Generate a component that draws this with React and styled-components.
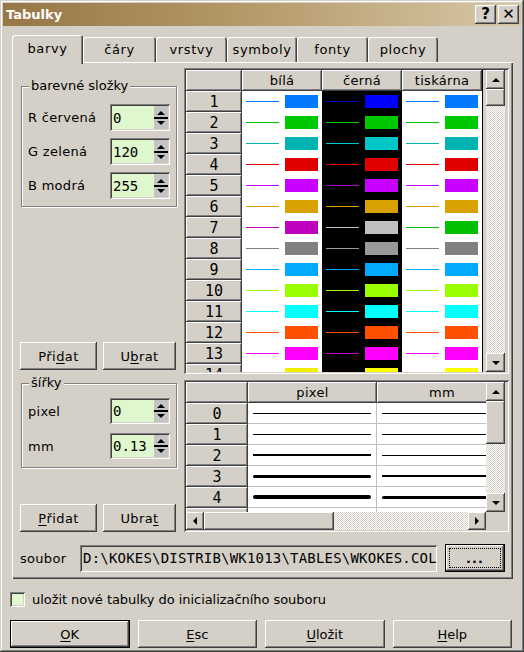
import React from 'react';
import styled, { createGlobalStyle, css } from 'styled-components';

const FACE = '#d4d0c8';
const SANS = `"DejaVu Sans", Verdana, sans-serif`;
const MONO = `"DejaVu Sans Mono", "Liberation Mono", monospace`;

const raised = css`
  box-shadow: inset -1px -1px #404040, inset 1px 1px #ffffff, inset -2px -2px #808080, inset 2px 2px ${FACE};
`;
const sunken = css`
  box-shadow: inset 1px 1px #808080, inset -1px -1px #ffffff, inset 2px 2px #404040, inset -2px -2px ${FACE};
`;
const checker = css`
  background: repeating-conic-gradient(#ffffff 0% 25%, ${FACE} 0% 50%) 0 0 / 2px 2px;
`;

const Global = createGlobalStyle`
  html, body { margin: 0; padding: 0; background: ${FACE}; }
  body { font-family: ${SANS}; font-size: 13px; color: #000; }
  * { box-sizing: border-box; }
`;

const Window = styled.div`
  width: 524px;
  height: 652px;
  background: ${FACE};
  padding: 3px;
  display: flex;
  flex-direction: column;
  font-family: ${SANS};
  font-size: 13px;
  box-shadow: inset -1px -1px #404040, inset 1px 1px ${FACE}, inset -2px -2px #808080, inset 2px 2px #ffffff;
`;

const TitleBar = styled.div`
  height: 23px;
  display: flex;
  align-items: center;
  justify-content: space-between;
  padding: 0 2px 0 2px;
  background: linear-gradient(90deg, #987646 0%, #b49868 45%, #d6c8a6 100%);
`;

const TitleText = styled.span`
  color: #fff;
  font-weight: bold;
  font-size: 13px;
  padding-left: 1px;
`;

const TitleButtons = styled.div`
  display: flex;
  gap: 2px;
`;

const TitleButton = styled.div`
  width: 21px;
  height: 19px;
  background: ${FACE};
  ${raised};
  display: flex;
  align-items: center;
  justify-content: center;
  font-weight: bold;
  font-size: 15px;
  line-height: 1;
  color: #000;
`;

const Content = styled.div`
  flex: 1;
  display: flex;
  flex-direction: column;
  padding: 9px 7px 0 7px;
`;

const TabRow = styled.div`
  height: 27px;
  margin-left: 2px;
  display: flex;
  align-items: flex-end;
  position: relative;
  z-index: 1;
`;

const Tab = styled.div`
  width: ${p => p.$w}px;
  height: ${p => (p.$active ? 29 : 25)}px;
  margin-bottom: ${p => (p.$active ? -2 : 0)}px;
  background: ${FACE};
  border-radius: 3px 3px 0 0;
  box-shadow: inset 1px 1px #ffffff, inset -1px 0 #404040, inset -2px 0 #808080;
  display: flex;
  align-items: center;
  justify-content: center;
  padding-bottom: ${p => (p.$active ? 3 : 0)}px;
  font-size: 13px;
  letter-spacing: 0.6px;
`;

const Panel = styled.div`
  margin-left: 2px;
  width: 501px;
  height: 517px;
  padding: 6px 4px 7px 9px;
  display: flex;
  flex-direction: column;
  box-shadow: inset 1px 1px #ffffff, inset -1px -1px #404040, inset -2px -2px #808080;
`;

const MainArea = styled.div`
  height: 464px;
  display: flex;
  gap: 7px;
`;

const LeftCol = styled.div`
  width: 156px;
  display: flex;
  flex-direction: column;
`;

const GroupBox = styled.div`
  position: relative;
  margin-top: ${p => p.$mt}px;
  height: ${p => p.$h}px;
  border: 1px solid #808080;
  box-shadow: inset 1px 1px #ffffff, 1px 1px #ffffff;
  padding: ${p => p.$pt}px 6px 0 6px;
  display: flex;
  flex-direction: column;
  gap: ${p => p.$gap}px;
`;

const GroupLegend = styled.span`
  position: absolute;
  left: 7px;
  top: -9px;
  padding: 0 2px;
  background: ${FACE};
  font-size: 13px;
  line-height: 16px;
`;

const FieldRow = styled.div`
  height: ${p => p.$h}px;
  display: flex;
  align-items: center;
  justify-content: space-between;
`;

const FieldLabel = styled.span`
  font-size: 13px;
  letter-spacing: 0.3px;
`;

const SpinBox = styled.div`
  width: 60px;
  height: 100%;
  padding: 2px;
  display: flex;
  ${sunken};
  background: #dff7cc;
`;

const SpinInput = styled.div`
  flex: 1;
  display: flex;
  align-items: center;
  padding-left: 1px;
  font-family: ${MONO};
  font-size: 14px;
  background: #dff7cc;
`;

const SpinArrows = styled.div`
  width: 14px;
  display: flex;
  flex-direction: column;
  background: #c4c4c4;
`;

const SpinArrow = styled.div`
  flex: 1;
  display: flex;
  align-items: ${p => (p.$dir === 'up' ? 'flex-end' : 'flex-start')};
  justify-content: center;
  padding: 2px 0;
  border-${p => (p.$dir === 'up' ? 'bottom' : 'top')}: 1px solid #000;
`;

const Arrow = styled.span`
  width: 0;
  height: 0;
  ${p => p.$dir === 'up' && css`
    border-left: ${p.$s}px solid transparent;
    border-right: ${p.$s}px solid transparent;
    border-bottom: ${p.$s}px solid #000;
  `}
  ${p => p.$dir === 'down' && css`
    border-left: ${p.$s}px solid transparent;
    border-right: ${p.$s}px solid transparent;
    border-top: ${p.$s}px solid #000;
  `}
  ${p => p.$dir === 'left' && css`
    border-top: ${p.$s}px solid transparent;
    border-bottom: ${p.$s}px solid transparent;
    border-right: ${p.$s}px solid #000;
  `}
  ${p => p.$dir === 'right' && css`
    border-top: ${p.$s}px solid transparent;
    border-bottom: ${p.$s}px solid transparent;
    border-left: ${p.$s}px solid #000;
  `}
`;

const ButtonRow = styled.div`
  margin-top: ${p => p.$mt}px;
  margin-left: -1px;
  height: 28px;
  display: flex;
  gap: 6px;
`;

const Button = styled.div`
  width: ${p => p.$w}px;
  height: 28px;
  background: ${FACE};
  ${raised};
  display: flex;
  align-items: center;
  justify-content: center;
  font-size: 13px;
  letter-spacing: 0.4px;
`;

const U = styled.span`
  text-decoration: underline;
  text-underline-offset: 2px;
`;

const GridCol = styled.div`
  width: 325px;
  display: flex;
  flex-direction: column;
  gap: 6px;
`;

const GridFrame = styled.div`
  height: ${p => p.$h}px;
  padding: 2px;
  ${sunken};
  background: ${FACE};
  display: flex;
  flex-direction: ${p => (p.$column ? 'column' : 'row')};
`;

const ColorTable = styled.div`
  width: 297px;
  margin-right: 3px;
  height: 302px;
  overflow: hidden;
  display: grid;
  grid-template-columns: 56px 80px 80px 80px;
  grid-auto-rows: 21px;
  align-content: start;
  border-right: 1px solid #000;
`;

const HeadCell = styled.div`
  background: ${FACE};
  ${raised};
  display: flex;
  align-items: center;
  justify-content: center;
  font-size: 13px;
  letter-spacing: 0.3px;
`;

const RowHead = styled(HeadCell)`
  font-family: ${MONO};
  font-size: 15px;
  letter-spacing: 0;
`;

const ColorCell = styled.div`
  background: ${p => (p.$dark ? '#000' : '#fff')};
  display: flex;
  align-items: center;
  padding-left: 4px;
`;

const LineSample = styled.span`
  width: 33px;
  height: 1px;
  margin-right: 6px;
  background: ${p => p.$c};
`;

const Swatch = styled.span`
  width: 33px;
  height: 13px;
  background: ${p => p.$c};
`;

const VScroll = styled.div`
  width: 19px;
  height: ${p => p.$h}px;
  display: flex;
  flex-direction: column;
`;

const ScrollBtn = styled.div`
  width: ${p => p.$w || 19}px;
  height: ${p => p.$h || 19}px;
  flex-shrink: 0;
  background: ${FACE};
  ${raised};
  display: flex;
  align-items: center;
  justify-content: center;
`;

const Thumb = styled.div`
  flex-shrink: 0;
  width: ${p => (p.$w ? `${p.$w}px` : '100%')};
  height: ${p => (p.$h ? `${p.$h}px` : '100%')};
  background: ${FACE};
  ${raised};
`;

const Track = styled.div`
  flex: 1;
  ${checker};
`;

const WidthTop = styled.div`
  height: 130px;
  display: flex;
`;

const WidthTable = styled.div`
  width: 300px;
  height: 130px;
  overflow: hidden;
  display: grid;
  grid-template-columns: 62px 129px 130px;
  grid-auto-rows: 21px;
  align-content: start;
`;

const WidthCell = styled.div`
  background: #fff;
  border-right: 1px solid #c0c0c0;
  border-bottom: 1px solid #c0c0c0;
  display: flex;
  align-items: center;
  padding: 0 5px 0 5px;
`;

const WidthLine = styled.span`
  flex: 1;
  height: ${p => p.$t}px;
  background: #000;
  border-radius: ${p => (p.$t > 2 ? 2 : 0)}px;
`;

const HScrollRow = styled.div`
  height: 18px;
  display: flex;
`;

const HScroll = styled.div`
  width: 300px;
  display: flex;
`;

const FileRow = styled.div`
  margin-top: 12px;
  height: 28px;
  display: flex;
  align-items: center;
`;

const FileLabel = styled.span`
  width: 60px;
  margin-left: -1px;
  font-size: 13px;
  letter-spacing: 0.3px;
`;

const PathField = styled.div`
  width: 357px;
  height: 27px;
  padding: 0 2px 0 3px;
  ${sunken};
  background: ${FACE};
  display: flex;
  align-items: center;
  font-family: ${MONO};
  font-size: 14px;
  letter-spacing: 0.2px;
  white-space: nowrap;
  overflow: hidden;
`;

const DefaultButtonStyle = css`
  background: ${FACE};
  box-shadow: inset 0 0 0 1px #000, inset -2px -2px #404040, inset 2px 2px #ffffff, inset -3px -3px #808080;
  display: flex;
  align-items: center;
  justify-content: center;
  font-size: 13px;
`;

const BrowseButton = styled.div`
  width: 60px;
  height: 28px;
  margin-left: 8px;
  padding: 4px;
  ${DefaultButtonStyle};
`;

const FocusRing = styled.span`
  flex: 1;
  align-self: stretch;
  border: 1px dotted #000;
  display: flex;
  align-items: center;
  justify-content: center;
  font-weight: bold;
  letter-spacing: 1px;
`;

const CheckRow = styled.div`
  margin-top: 13px;
  height: 15px;
  display: flex;
  align-items: center;
  gap: 7px;
`;

const CheckBox = styled.span`
  width: 15px;
  height: 15px;
  background: #e1f7cf;
  ${sunken};
`;

const CheckLabel = styled.span`
  font-size: 13px;
  letter-spacing: -0.05px;
`;

const ActionRow = styled.div`
  margin-top: 13px;
  width: 502px;
  height: 28px;
  display: grid;
  grid-template-columns: repeat(4, 1fr);
  gap: 8px;
`;

const ActionButton = styled.div`
  height: 28px;
  ${p => (p.$default ? DefaultButtonStyle : css`
    background: ${FACE};
    ${raised};
    display: flex;
    align-items: center;
    justify-content: center;
    font-size: 13px;
  `)}
`;

const colorRows = [
  { w: '#0078ff', k: '#0000ff', kl: '#0000c0', p: '#0078ff' },
  { w: '#00c800', k: '#00c800', p: '#00c800' },
  { w: '#00b4b4', k: '#00c8c8', p: '#00b4b4' },
  { w: '#e00000', k: '#e00000', p: '#e00000' },
  { w: '#c800ff', k: '#c800ff', kl: '#a000c8', p: '#c800ff' },
  { w: '#d8a000', k: '#d8a000', p: '#d8a000' },
  { w: '#bf00bf', k: '#c0c0c0', p: '#00c000' },
  { w: '#808080', k: '#999999', p: '#808080' },
  { w: '#00aaff', k: '#00aaff', p: '#00aaff' },
  { w: '#99ff00', k: '#99ff00', p: '#99ff00' },
  { w: '#00ffff', k: '#00ffff', p: '#00ffff' },
  { w: '#ff5000', k: '#ff5000', p: '#ff5000' },
  { w: '#ff00ff', k: '#ff00ff', kl: '#c800c8', p: '#ff00ff' },
  { w: '#f0f000', k: '#ffff00', p: '#ffff00' },
];

const widthRows = [
  { n: '0', px: 1, mm: 1 },
  { n: '1', px: 1, mm: 1 },
  { n: '2', px: 2, mm: 1 },
  { n: '3', px: 3, mm: 2 },
  { n: '4', px: 4, mm: 3 },
  { n: '', px: 0, mm: 0 },
];

const tabs = [
  { t: 'barvy', w: 71 },
  { t: 'čáry', w: 73 },
  { t: 'vrstvy', w: 71 },
  { t: 'symboly', w: 70 },
  { t: 'fonty', w: 71 },
  { t: 'plochy', w: 70 },
];

function LabeledSpin({ label, value, h }) {
  return (
    <FieldRow $h={h}>
      <FieldLabel>{label}</FieldLabel>
      <SpinBox>
        <SpinInput>{value}</SpinInput>
        <SpinArrows>
          <SpinArrow $dir="up"><Arrow $dir="up" $s={4} /></SpinArrow>
          <SpinArrow $dir="down"><Arrow $dir="down" $s={4} /></SpinArrow>
        </SpinArrows>
      </SpinBox>
    </FieldRow>
  );
}

export default function App() {
  return (
    <>
      <Global />
      <Window>
        <TitleBar>
          <TitleText>Tabulky</TitleText>
          <TitleButtons>
            <TitleButton>?</TitleButton>
            <TitleButton>✕</TitleButton>
          </TitleButtons>
        </TitleBar>
        <Content>
          <TabRow>
            {tabs.map((t, i) => (
              <Tab key={t.t} $w={t.w} $active={i === 0}>{t.t}</Tab>
            ))}
          </TabRow>
          <Panel>
            <MainArea>
              <LeftCol>
                <GroupBox $mt={18} $h={121} $pt={17} $gap={7}>
                  <GroupLegend>barevné složky</GroupLegend>
                  <LabeledSpin label="R červená" value="0" h={27} />
                  <LabeledSpin label="G zelená" value="120" h={27} />
                  <LabeledSpin label="B modrá" value="255" h={27} />
                </GroupBox>
                <ButtonRow $mt={135}>
                  <Button $w={77}>Při<U>d</U>at</Button>
                  <Button $w={73}>U<U>b</U>rat</Button>
                </ButtonRow>
                <GroupBox $mt={13} $h={85} $pt={14} $gap={9}>
                  <GroupLegend>šířky</GroupLegend>
                  <LabeledSpin label="pixel" value="0" h={26} />
                  <LabeledSpin label="mm" value="0.13" h={26} />
                </GroupBox>
                <ButtonRow $mt={36}>
                  <Button $w={77}><U>P</U>řidat</Button>
                  <Button $w={73}>Ubra<U>t</U></Button>
                </ButtonRow>
              </LeftCol>
              <GridCol>
                <GridFrame $h={306}>
                  <ColorTable>
                    <HeadCell />
                    <HeadCell>bílá</HeadCell>
                    <HeadCell>černá</HeadCell>
                    <HeadCell>tiskárna</HeadCell>
                    {colorRows.map((r, i) => (
                      <React.Fragment key={i}>
                        <RowHead>{i + 1}</RowHead>
                        <ColorCell>
                          <LineSample $c={r.w} />
                          <Swatch $c={r.w} />
                        </ColorCell>
                        <ColorCell $dark>
                          <LineSample $c={r.kl || r.k} />
                          <Swatch $c={r.k} />
                        </ColorCell>
                        <ColorCell>
                          <LineSample $c={r.p} />
                          <Swatch $c={r.p} />
                        </ColorCell>
                      </React.Fragment>
                    ))}
                  </ColorTable>
                  <VScroll $h={302}>
                    <ScrollBtn><Arrow $dir="up" $s={4} /></ScrollBtn>
                    <Thumb $h={17} />
                    <Track />
                    <ScrollBtn><Arrow $dir="down" $s={4} /></ScrollBtn>
                  </VScroll>
                </GridFrame>
                <GridFrame $h={152} $column>
                  <WidthTop>
                    <WidthTable>
                      <HeadCell />
                      <HeadCell>pixel</HeadCell>
                      <HeadCell>mm</HeadCell>
                      {widthRows.map((r, i) => (
                        <React.Fragment key={i}>
                          <RowHead>{r.n}</RowHead>
                          <WidthCell><WidthLine $t={r.px} /></WidthCell>
                          <WidthCell><WidthLine $t={r.mm} /></WidthCell>
                        </React.Fragment>
                      ))}
                    </WidthTable>
                    <VScroll $h={130}>
                      <ScrollBtn><Arrow $dir="up" $s={4} /></ScrollBtn>
                      <Thumb $h={43} />
                      <Track />
                      <ScrollBtn><Arrow $dir="down" $s={4} /></ScrollBtn>
                    </VScroll>
                  </WidthTop>
                  <HScrollRow>
                    <HScroll>
                      <ScrollBtn $w={18} $h={18}><Arrow $dir="left" $s={4} /></ScrollBtn>
                      <Thumb $w={130} />
                      <Track />
                      <ScrollBtn $w={18} $h={18}><Arrow $dir="right" $s={4} /></ScrollBtn>
                    </HScroll>
                  </HScrollRow>
                </GridFrame>
              </GridCol>
            </MainArea>
            <FileRow>
              <FileLabel>soubor</FileLabel>
              <PathField>D:\KOKES\DISTRIB\WK1013\TABLES\WKOKES.COL</PathField>
              <BrowseButton><FocusRing>...</FocusRing></BrowseButton>
            </FileRow>
          </Panel>
          <CheckRow>
            <CheckBox />
            <CheckLabel>uložit nové tabulky do inicializačního souboru</CheckLabel>
          </CheckRow>
          <ActionRow>
            <ActionButton $default><U>O</U>K</ActionButton>
            <ActionButton><U>E</U>sc</ActionButton>
            <ActionButton><U>U</U>ložit</ActionButton>
            <ActionButton><U>H</U>elp</ActionButton>
          </ActionRow>
        </Content>
      </Window>
    </>
  );
}
